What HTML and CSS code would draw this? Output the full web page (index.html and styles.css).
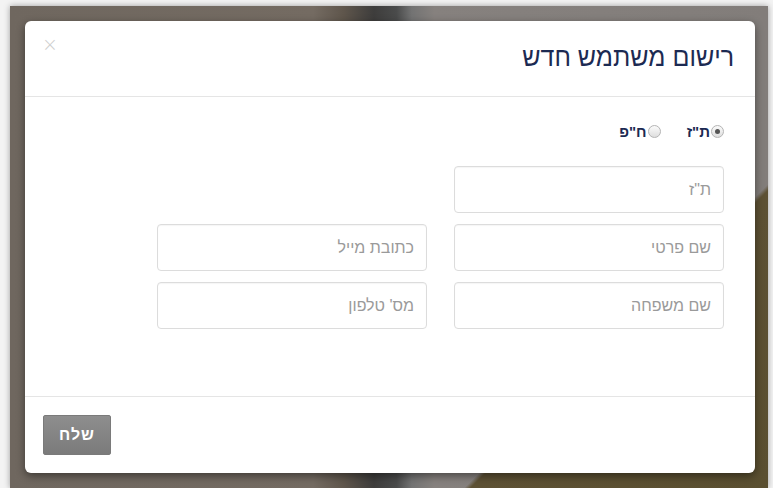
FILE: index.html
```html
<!DOCTYPE html>
<html lang="he" dir="rtl">
<head>
<meta charset="utf-8">
<title>רישום משתמש חדש</title>
<link rel="stylesheet" href="styles.css">
</head>
<body>
<div class="backdrop">
  <div class="modal">
    <div class="modal-header">
      <h4 class="modal-title">רישום משתמש חדש</h4>
      <span class="close">×</span>
    </div>
    <div class="modal-body">
      <div class="id-type">
        <label class="radio"><input type="radio" name="idtype" checked>ת"ז</label>
        <label class="radio"><input type="radio" name="idtype">ח"פ</label>
      </div>
      <div class="fields">
        <input class="field" type="text" placeholder="ת&quot;ז">
        <span class="spacer"></span>
        <input class="field" type="text" placeholder="שם פרטי">
        <input class="field" type="text" placeholder="כתובת מייל">
        <input class="field" type="text" placeholder="שם משפחה">
        <input class="field" type="text" placeholder="מס' טלפון">
      </div>
    </div>
    <div class="modal-footer">
      <button class="btn-send" type="button">שלח</button>
    </div>
  </div>
</div>
</body>
</html>
```

FILE: styles.css
```css
* { box-sizing: border-box; }

html, body {
  margin: 0;
  height: 488px;
  overflow: hidden;
}

body {
  background: #f3f3f3;
  padding: 6px 5px 0 10px;
  font-family: "Liberation Sans", "DejaVu Sans", Arial, sans-serif;
  direction: rtl;
}

/* dimmed page behind the dialog */
.backdrop {
  direction: ltr;
  width: 758px;
  height: 482px;
  padding: 15px 13px 0 15px;
  box-shadow: 0 0 6px rgba(0, 0, 0, 0.35);
  background:
    linear-gradient(135deg, rgba(92, 80, 52, 0) 75.5%, #5d5134 76%, #5a4f30 100%),
    linear-gradient(90deg, #6f675f 0%, #746b62 40%, #5f564c 44%, #3e3d3c 48%, #4a4b4b 51%, #737373 53%, #86817e 56%, #827d7a 100%);
}

.modal {
  direction: rtl;
  width: 730px;
  height: 452px;
  background: #fff;
  border-radius: 6px;
  box-shadow: 0 3px 9px rgba(0, 0, 0, 0.45);
  display: flex;
  flex-direction: column;
}

.modal-header {
  height: 76px;
  flex: none;
  border-bottom: 1px solid #e5e5e5;
  display: flex;
  justify-content: space-between;
  align-items: flex-start;
  padding: 0 21px 0 17px;
}

.modal-title {
  margin: 21px 0 0;
  font-size: 25px;
  font-weight: normal;
  line-height: 30px;
  color: #1c2a52;
  transform: scaleY(1.05);
}

.close {
  margin-top: 13px;
  font-size: 19px;
  line-height: 20px;
  color: #cfcfcf;
  font-family: "DejaVu Sans", sans-serif;
  font-weight: 200;
}

.modal-body {
  flex: 1;
  border-bottom: 1px solid #e5e5e5;
  padding: 24px 31px 0;
}

.id-type {
  display: flex;
  gap: 26px;
  height: 20px;
  align-items: center;
  margin-bottom: 25px;
}

.radio {
  display: flex;
  align-items: center;
  font-size: 15px;
  font-weight: bold;
  color: #1c2a52;
}

.radio input {
  appearance: none;
  -webkit-appearance: none;
  width: 13px;
  height: 13px;
  margin: 0 0 0 1px;
  border-radius: 50%;
  border: 1px solid #b4b4b4;
  background: linear-gradient(#fbfbfb, #dedede);
  display: grid;
  place-items: center;
}

.radio input:checked::after {
  content: "";
  width: 5px;
  height: 5px;
  border-radius: 50%;
  background: #555;
}

.fields {
  display: grid;
  grid-template-columns: 270px 270px;
  column-gap: 27px;
  row-gap: 11px;
}

.field {
  height: 47px;
  border: 1px solid #dcdcdc;
  border-radius: 4px;
  padding: 0 12px;
  font-family: inherit;
  font-size: 16px;
  color: #555;
  background: #fff;
  box-shadow: inset 0 1px 1px rgba(0, 0, 0, 0.04);
}

.field::placeholder {
  color: #9a9a9a;
}

.modal-footer {
  height: 76px;
  flex: none;
  padding: 18px;
  display: flex;
  justify-content: flex-end;
}

.btn-send {
  width: 68px;
  height: 40px;
  border: 1px solid #7a7a7a;
  border-radius: 2px;
  background: linear-gradient(#8e8e8e, #7b7b7b);
  color: #fff;
  font-family: inherit;
  font-size: 16px;
  font-weight: bold;
  letter-spacing: 1px;
  padding: 0;
}
```
